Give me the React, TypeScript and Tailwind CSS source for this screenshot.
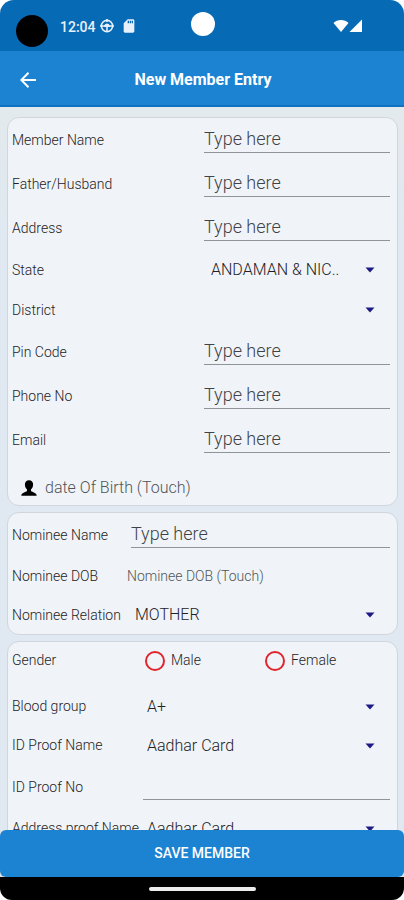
import React from "react";
import { MdSdCard } from "react-icons/md";

const Row = ({ children, className = "h-11" }: any) => (
  <div className={`flex items-center ${className}`}>{children}</div>
);

const Label = ({ id, text, className }: any) => (
  <label
    htmlFor={id}
    className={`shrink-0 whitespace-nowrap text-[14px] font-light text-[#1f2225] ${className}`}
  >
    {text}
  </label>
);

const TextField = ({ id, placeholder = "Type here" }: any) => (
  <input
    id={id}
    name={id}
    type="text"
    placeholder={placeholder}
    className="h-[26px] w-full min-w-0 flex-1 border-b border-[#8f9498] bg-transparent pb-[2px] text-[18px] font-light text-[#1f2225] outline-none placeholder:text-[#3f4346]"
  />
);

const SelectField = ({ id, options, className = "pl-1" }: any) => (
  <div className="relative min-w-0 flex-1">
    <select
      id={id}
      name={id}
      className={`h-8 w-full appearance-none bg-transparent text-[16px] font-light text-[#1f2225] outline-none ${className}`}
    >
      {options.map((option: string) => (
        <option key={option}>{option}</option>
      ))}
    </select>
    <svg
      viewBox="0 0 10 6"
      className="pointer-events-none absolute top-[13px] right-[15px] h-[6px] w-[10px]"
    >
      <path d="M0.5 0.5h9L5 5.5z" fill="#1d1a86" />
    </svg>
  </div>
);

const Radio = ({ id, text }: any) => (
  <label htmlFor={id} className="flex w-[120px] items-center gap-[6px]">
    <input
      id={id}
      type="radio"
      name="gender"
      className="size-5 appearance-none rounded-full border-2 border-[#e0242c] checked:bg-[#e0242c]"
    />
    <span className="text-[14px] font-light text-[#1f2225]">{text}</span>
  </label>
);

const Card = ({ children }: any) => (
  <section className="rounded-xl border border-[#d0d6db] bg-[#f0f4f8] pr-[7px] pl-1">
    {children}
  </section>
);

const StatusBar = () => (
  <div className="flex h-[51px] shrink-0 items-start bg-[#076ab5] pl-4 text-[#e8f1fa]">
    <span className="mt-[15px] size-8 rounded-full bg-black" />
    <span className="mt-[17px] ml-3 w-[35px] text-[14px] leading-5 font-medium">
      12:04
    </span>
    <svg
      viewBox="0 0 16 16"
      className="mt-[18px] ml-1 size-4"
      fill="none"
      stroke="currentColor"
    >
      <circle cx="8" cy="8" r="5.6" strokeWidth="1.6" />
      <path d="M8 1v3M8 8v6M1 8h14" strokeWidth="1.6" />
      <path d="M5.500 8.500a2.500 2.500 0 0 1 5 0z" fill="currentColor" />
    </svg>
    <MdSdCard className="mt-[18px] ml-[6px] size-4" />
    <span className="mt-3 ml-[54px] size-6 rounded-full bg-white" />
    <svg
      viewBox="0 0 30 14"
      className="mt-[19px] mr-[41px] ml-auto h-[14px] w-[30px]"
      fill="#fff"
    >
      <path d="M0.5 4C4 0 12 0 15.500 4L8 13z" />
      <path d="M29 0.500v12.500H16.500z" />
    </svg>
  </div>
);

const App = () => {
  return (
    <div className="bg-white font-['Roboto',sans-serif]">
      <div className="flex h-screen flex-col overflow-hidden rounded-t-[14px] rounded-b-[12px] bg-[#e2e9f0]">
        <StatusBar />
        <header className="grid h-[56px] shrink-0 grid-cols-[56px_1fr_54px] items-center border-b-2 border-[#0f72c0] bg-[#1c83d3] pt-1 text-white">
          <button type="button" aria-label="Back" className="pl-5">
            <svg
              viewBox="0 0 16 16"
              className="size-4"
              fill="none"
              stroke="currentColor"
              strokeWidth="2"
            >
              <path d="M16 8H1.500M8.500 0.800L1.300 8l7.200 7.200" />
            </svg>
          </button>
          <h1 className="text-center text-[16px] font-bold">
            New Member Entry
          </h1>
        </header>

        <main className="flex min-h-0 flex-1 flex-col overflow-y-auto bg-linear-to-b from-[#e2eaed] to-[#e0e8f2] to-20% pt-[10px] pr-[6px] pl-[7px] [scrollbar-width:none]">
          <form id="member" className="flex flex-col gap-[6px]">
            <Card>
              <Row>
                <Label id="name" text="Member Name" className="w-[192px]" />
                <TextField id="name" />
              </Row>
              <Row>
                <Label id="father" text="Father/Husband" className="w-[192px]" />
                <TextField id="father" />
              </Row>
              <Row>
                <Label id="address" text="Address" className="w-[192px]" />
                <TextField id="address" />
              </Row>
              <Row className="h-10">
                <Label id="state" text="State" className="w-[192px]" />
                <SelectField
                  id="state"
                  options={["ANDAMAN & NIC.."]}
                  className="pl-[7px]"
                />
              </Row>
              <Row className="h-10">
                <Label id="district" text="District" className="w-[192px]" />
                <SelectField id="district" options={[""]} />
              </Row>
              <Row>
                <Label id="pin" text="Pin Code" className="w-[192px]" />
                <TextField id="pin" />
              </Row>
              <Row>
                <Label id="phone" text="Phone No" className="w-[192px]" />
                <TextField id="phone" />
              </Row>
              <Row>
                <Label id="email" text="Email" className="w-[192px]" />
                <TextField id="email" />
              </Row>
              <Row className="h-[43px] pt-2">
                <button
                  type="button"
                  className="flex items-center gap-2 pl-[9px] text-[16px] font-light text-[#505457]"
                >
                  <svg viewBox="0 0 16 16" className="size-4" fill="#000">
                    <path d="M8 0.300C5.400 0.300 3.900 2.100 3.900 4.600c0 2.300 0.900 4 2.100 5v1.500C4.500 12.300 0.500 12.700 0.300 15.700h15.400c-0.200-3-4.200-3.400-5.700-4.600V9.600c1.200-1 2.100-2.700 2.100-5C12.100 2.100 10.600 0.300 8 0.300z" />
                  </svg>
                  date Of Birth (Touch)
                </button>
              </Row>
            </Card>

            <Card>
              <Row>
                <Label id="nominee" text="Nominee Name" className="w-[119px]" />
                <TextField id="nominee" />
              </Row>
              <Row className="h-[39px]">
                <Label id="nomineeDob" text="Nominee DOB" className="w-[115px]" />
                <button
                  id="nomineeDob"
                  type="button"
                  className="text-[14px] font-light text-[#505457]"
                >
                  Nominee DOB (Touch)
                </button>
              </Row>
              <Row className="h-[38px]">
                <Label
                  id="relation"
                  text="Nominee Relation"
                  className="w-[119px]"
                />
                <SelectField id="relation" options={["MOTHER"]} />
              </Row>
            </Card>

            <Card>
              <Row className="mb-2 h-[37px]">
                <span className="w-[133px] shrink-0 text-[14px] font-light text-[#1f2225]">
                  Gender
                </span>
                <Radio id="male" text="Male" />
                <Radio id="female" text="Female" />
              </Row>
              <Row className="h-[39px]">
                <Label id="blood" text="Blood group" className="w-[131px]" />
                <SelectField id="blood" options={["A+"]} />
              </Row>
              <Row className="h-[39px]">
                <Label id="proof" text="ID Proof Name" className="w-[131px]" />
                <SelectField id="proof" options={["Aadhar Card"]} />
              </Row>
              <Row>
                <Label id="proofNo" text="ID Proof No" className="w-[131px]" />
                <TextField id="proofNo" placeholder="" />
              </Row>
              <Row className="h-[39px]">
                <Label
                  id="addressProof"
                  text="Address proof Name"
                  className="w-[131px]"
                />
                <SelectField id="addressProof" options={["Aadhar Card"]} />
              </Row>
            </Card>
          </form>
        </main>

        <footer className="shrink-0 bg-black">
          <div className="bg-[#dfe5ea]">
            <button
              type="submit"
              form="member"
              className="h-[47px] w-full rounded-md bg-[#1c83d3] text-[14px] font-medium text-white"
            >
              SAVE MEMBER
            </button>
          </div>
          <div className="flex h-[23px] items-center justify-center">
            <span className="h-1 w-[107px] rounded-full bg-[#ececec]" />
          </div>
        </footer>
      </div>
    </div>
  );
};

export default App;
